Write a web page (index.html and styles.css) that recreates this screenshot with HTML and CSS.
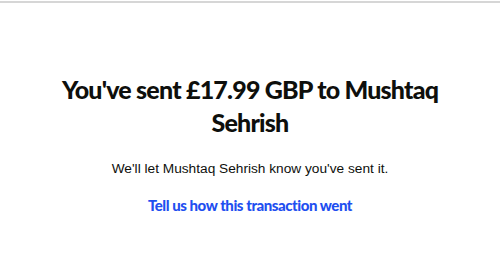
FILE: index.html
```html
<!DOCTYPE html>
<html>
<head>
<meta charset="utf-8">
<link rel="stylesheet" href="styles.css">
</head>
<body>
<div class="topbar"></div>
<main class="content">
  <h1 class="title">You've sent £17.99 GBP to Mushtaq Sehrish</h1>
  <p class="note">We'll let Mushtaq Sehrish know you've sent it.</p>
  <a class="link" href="#">Tell us how this transaction went</a>
</main>
</body>
</html>
```
FILE: styles.css
```css
html, body {
  margin: 0;
  padding: 0;
  background: #fff;
}
.topbar {
  height: 2px;
  margin-top: 1px;
  background: #d6d6d6;
}
.content {
  display: flex;
  flex-direction: column;
  align-items: center;
  text-align: center;
  padding: 0 50px;
}
.title {
  margin: 70px 0 0;
  font-family: Lato, sans-serif;
  font-weight: 900;
  font-size: 25px;
  line-height: 33px;
  letter-spacing: -0.8px;
  color: #0e0f0c;
  max-width: 400px;
}
.note {
  margin: 20px 0 0;
  font-family: "Liberation Sans", Arial, sans-serif;
  font-size: 13.7px;
  line-height: 20px;
  color: #0e0f0c;
}
.link {
  margin-top: 16px;
  font-family: Lato, sans-serif;
  font-weight: 900;
  font-size: 15px;
  line-height: 20px;
  letter-spacing: -0.45px;
  color: #1f4ff0;
  text-decoration: none;
}
```
